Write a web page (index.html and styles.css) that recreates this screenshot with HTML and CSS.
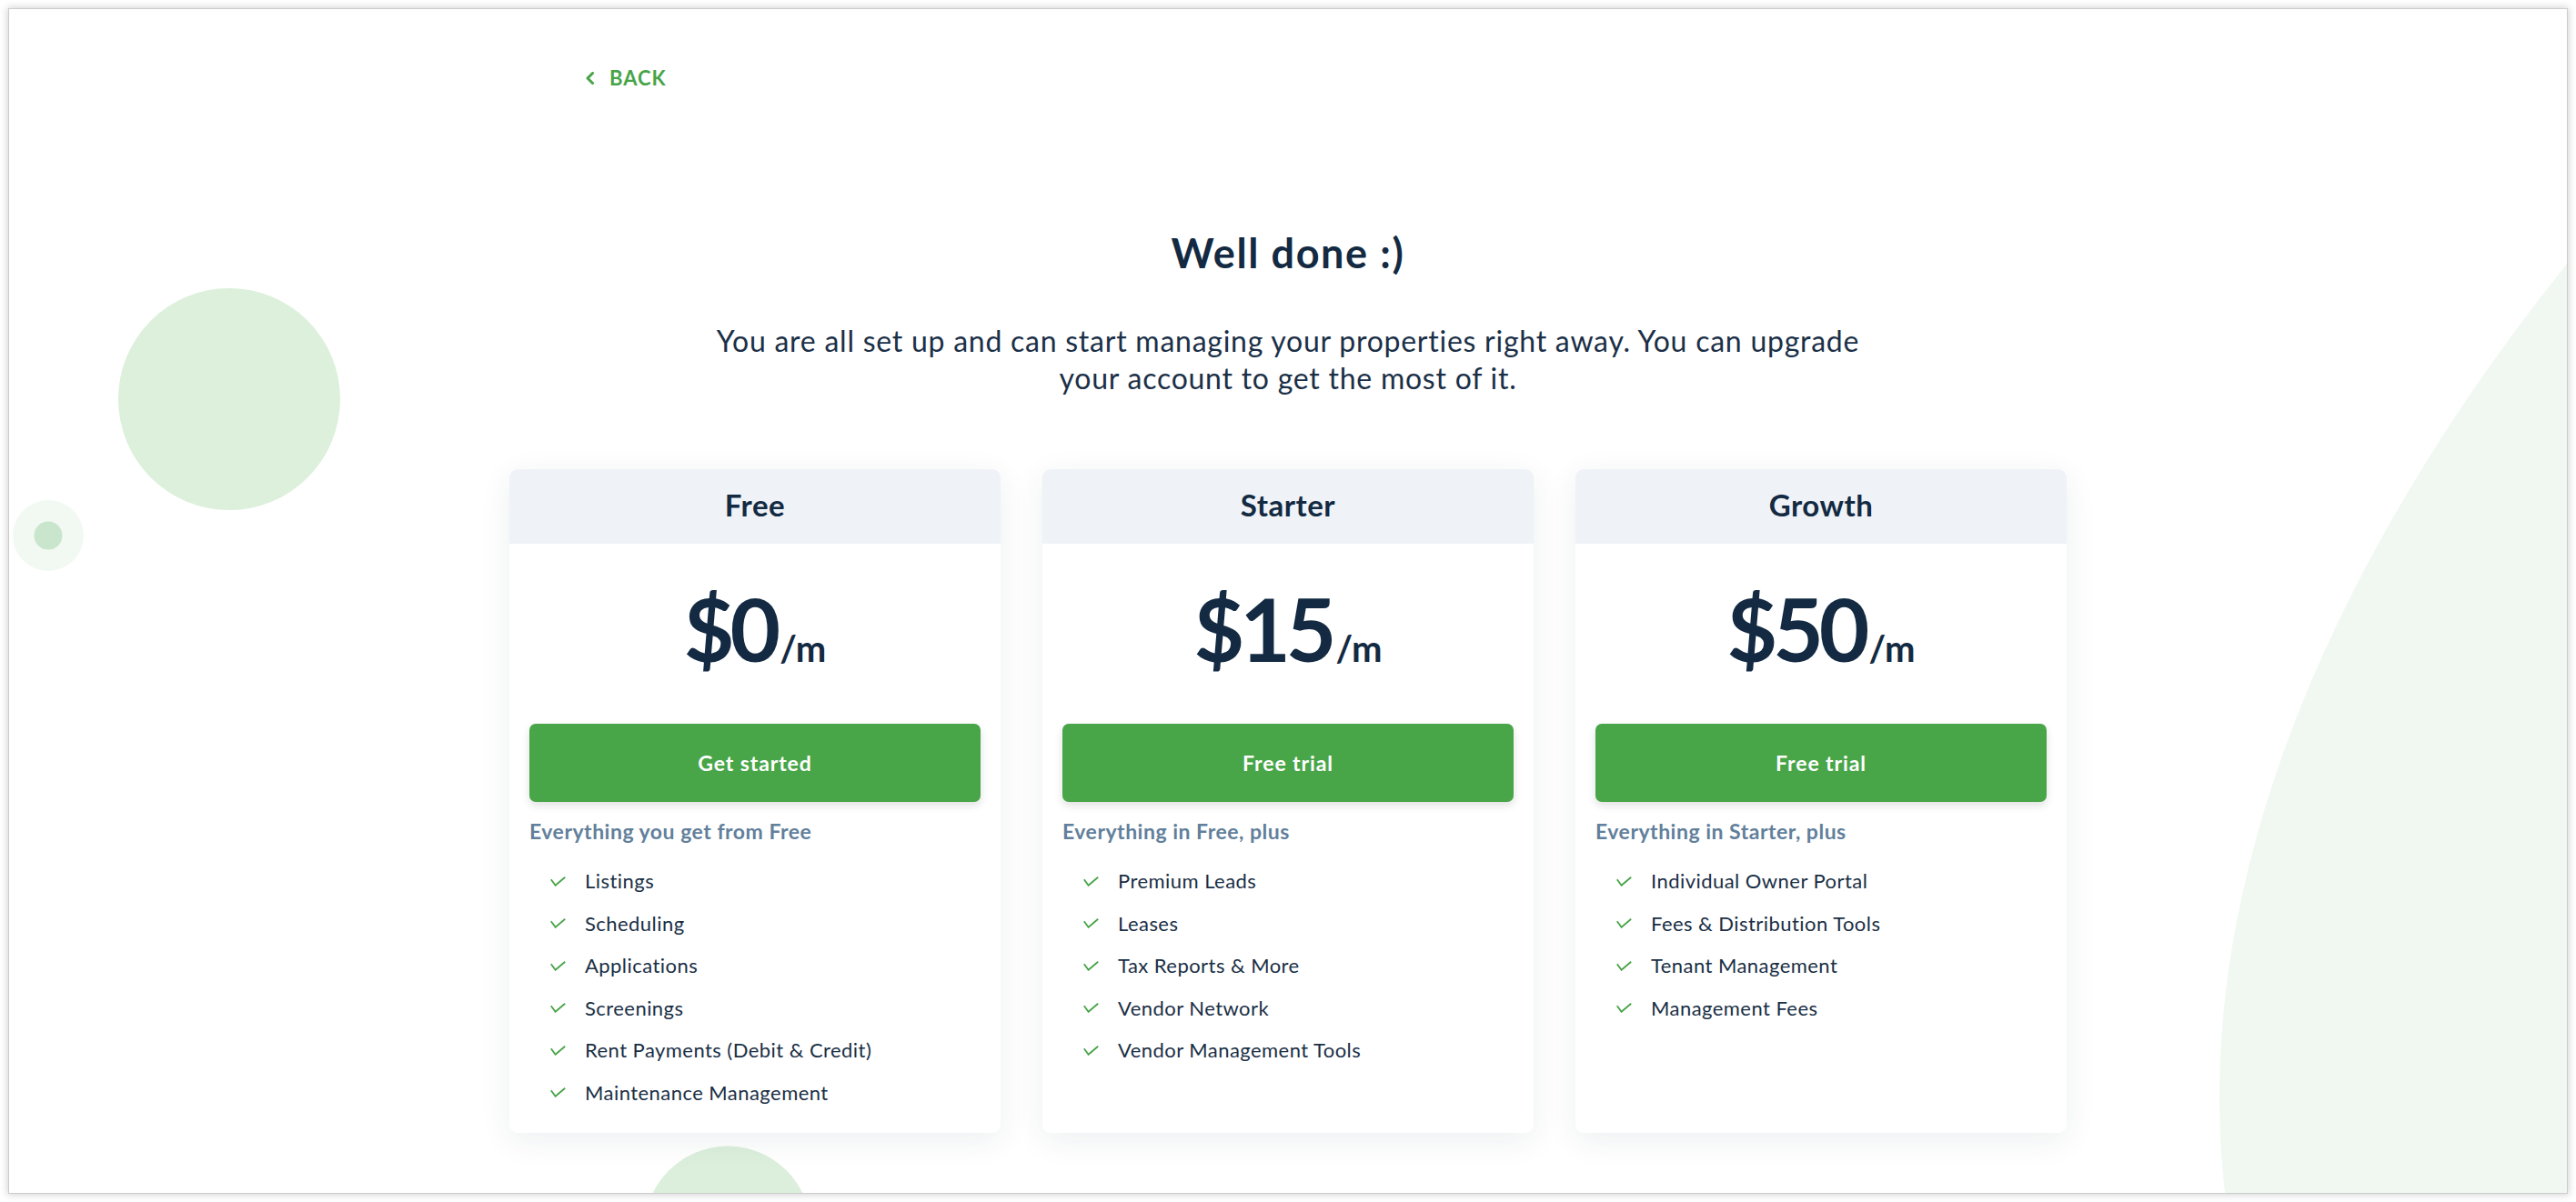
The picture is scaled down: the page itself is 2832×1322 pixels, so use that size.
FILE: index.html
```html
<!DOCTYPE html>
<html lang="en">
<head>
<meta charset="utf-8">
<title>Well done</title>
<link rel="stylesheet" href="styles.css">
</head>
<body>
<div class="window">
  <svg class="decor" viewBox="0 0 2812 1302" width="2812" height="1302" aria-hidden="true">
    <path d="M2812,280 C2620,520 2430,850 2430,1197 C2430,1240 2433,1275 2437,1310 L2812,1310 Z" fill="#f1f8f2"/>
    <circle cx="242" cy="429" r="122" fill="#dcf0dc"/>
    <circle cx="43" cy="579" r="39" fill="#f2f9f2"/>
    <circle cx="43" cy="579" r="15.5" fill="#c9e5cc"/>
    <circle cx="790" cy="1342" r="91.5" fill="#dcefdc"/>
  </svg>
  <main class="content">
    <a class="back" href="#">
      <svg class="back-icon" viewBox="0 0 10 14" width="10" height="14"><polyline points="8.5,1.5 3,7 8.5,12.5" fill="none" stroke="#47a447" stroke-width="3" stroke-linecap="round" stroke-linejoin="round"/></svg>
      <span>BACK</span>
    </a>
    <h1 class="title">Well done :)</h1>
    <p class="lead">You are all set up and can start managing your properties right away. You can upgrade your account to get the most of it.</p>
    <section class="plans">
      <article class="plan">
        <header class="plan-head">Free</header>
        <div class="plan-body">
          <div class="price"><span class="amount">$0</span><span class="per">/m</span></div>
          <a class="cta" href="#">Get started</a>
          <h3 class="includes">Everything you get from Free</h3>
          <ul class="features">
            <li><svg class="check" viewBox="0 0 17 11" width="17" height="11"><polyline points="0.8,3.2 5.6,9.8 16.2,0.8" fill="none" stroke="#47a447" stroke-width="1.8"/></svg>Listings</li>
            <li><svg class="check" viewBox="0 0 17 11" width="17" height="11"><polyline points="0.8,3.2 5.6,9.8 16.2,0.8" fill="none" stroke="#47a447" stroke-width="1.8"/></svg>Scheduling</li>
            <li><svg class="check" viewBox="0 0 17 11" width="17" height="11"><polyline points="0.8,3.2 5.6,9.8 16.2,0.8" fill="none" stroke="#47a447" stroke-width="1.8"/></svg>Applications</li>
            <li><svg class="check" viewBox="0 0 17 11" width="17" height="11"><polyline points="0.8,3.2 5.6,9.8 16.2,0.8" fill="none" stroke="#47a447" stroke-width="1.8"/></svg>Screenings</li>
            <li><svg class="check" viewBox="0 0 17 11" width="17" height="11"><polyline points="0.8,3.2 5.6,9.8 16.2,0.8" fill="none" stroke="#47a447" stroke-width="1.8"/></svg>Rent Payments (Debit &amp; Credit)</li>
            <li><svg class="check" viewBox="0 0 17 11" width="17" height="11"><polyline points="0.8,3.2 5.6,9.8 16.2,0.8" fill="none" stroke="#47a447" stroke-width="1.8"/></svg>Maintenance Management</li>
          </ul>
        </div>
      </article>
      <article class="plan">
        <header class="plan-head">Starter</header>
        <div class="plan-body">
          <div class="price"><span class="amount">$15</span><span class="per">/m</span></div>
          <a class="cta" href="#">Free trial</a>
          <h3 class="includes">Everything in Free, plus</h3>
          <ul class="features">
            <li><svg class="check" viewBox="0 0 17 11" width="17" height="11"><polyline points="0.8,3.2 5.6,9.8 16.2,0.8" fill="none" stroke="#47a447" stroke-width="1.8"/></svg>Premium Leads</li>
            <li><svg class="check" viewBox="0 0 17 11" width="17" height="11"><polyline points="0.8,3.2 5.6,9.8 16.2,0.8" fill="none" stroke="#47a447" stroke-width="1.8"/></svg>Leases</li>
            <li><svg class="check" viewBox="0 0 17 11" width="17" height="11"><polyline points="0.8,3.2 5.6,9.8 16.2,0.8" fill="none" stroke="#47a447" stroke-width="1.8"/></svg>Tax Reports &amp; More</li>
            <li><svg class="check" viewBox="0 0 17 11" width="17" height="11"><polyline points="0.8,3.2 5.6,9.8 16.2,0.8" fill="none" stroke="#47a447" stroke-width="1.8"/></svg>Vendor Network</li>
            <li><svg class="check" viewBox="0 0 17 11" width="17" height="11"><polyline points="0.8,3.2 5.6,9.8 16.2,0.8" fill="none" stroke="#47a447" stroke-width="1.8"/></svg>Vendor Management Tools</li>
          </ul>
        </div>
      </article>
      <article class="plan">
        <header class="plan-head">Growth</header>
        <div class="plan-body">
          <div class="price"><span class="amount">$50</span><span class="per">/m</span></div>
          <a class="cta" href="#">Free trial</a>
          <h3 class="includes">Everything in Starter, plus</h3>
          <ul class="features">
            <li><svg class="check" viewBox="0 0 17 11" width="17" height="11"><polyline points="0.8,3.2 5.6,9.8 16.2,0.8" fill="none" stroke="#47a447" stroke-width="1.8"/></svg>Individual Owner Portal</li>
            <li><svg class="check" viewBox="0 0 17 11" width="17" height="11"><polyline points="0.8,3.2 5.6,9.8 16.2,0.8" fill="none" stroke="#47a447" stroke-width="1.8"/></svg>Fees &amp; Distribution Tools</li>
            <li><svg class="check" viewBox="0 0 17 11" width="17" height="11"><polyline points="0.8,3.2 5.6,9.8 16.2,0.8" fill="none" stroke="#47a447" stroke-width="1.8"/></svg>Tenant Management</li>
            <li><svg class="check" viewBox="0 0 17 11" width="17" height="11"><polyline points="0.8,3.2 5.6,9.8 16.2,0.8" fill="none" stroke="#47a447" stroke-width="1.8"/></svg>Management Fees</li>
          </ul>
        </div>
      </article>
    </section>
  </main>
</div>
</body>
</html>
```

FILE: styles.css
```css
* { box-sizing: border-box; }

html, body {
  margin: 0;
  padding: 0;
  background: #ffffff;
}

body {
  font-family: Lato, "Noto Sans", sans-serif;
  color: #132a42;
}

.window {
  position: relative;
  margin: 10px;
  height: 1302px;
  background: #ffffff;
  overflow: hidden;
  box-shadow: 0 0 0 1px #cccccc, 0 0 8px 2px rgba(0, 0, 0, 0.18);
}

.decor {
  position: absolute;
  top: 0;
  left: 0;
  display: block;
}

.content {
  position: relative;
  width: 1712px;
  margin: 0 auto;
  padding-top: 64px;
  display: flex;
  flex-direction: column;
}

.back {
  align-self: flex-start;
  margin-left: 83px;
  display: flex;
  align-items: center;
  gap: 17px;
  height: 24px;
  color: #47a447;
  text-decoration: none;
  font-weight: 700;
  font-size: 22px;
  line-height: 24px;
  letter-spacing: 1px;
}

.back-icon { display: block; }

.title {
  margin: 154px 0 0;
  text-align: center;
  font-size: 45px;
  line-height: 52px;
  font-weight: 700;
  letter-spacing: 1.6px;
  color: #132a42;
}

.lead {
  margin: 50px auto 0;
  max-width: 1290px;
  text-align: center;
  font-size: 32px;
  line-height: 41px;
  font-weight: 400;
  letter-spacing: 0.75px;
  color: #1b3047;
}

.plans {
  margin-top: 80px;
  display: grid;
  grid-template-columns: repeat(3, 540px);
  column-gap: 46px;
  align-items: stretch;
}

.plan {
  background: #ffffff;
  border-radius: 9px;
  overflow: hidden;
  box-shadow: 0 8px 34px rgba(30, 45, 60, 0.08);
}

.plan-head {
  height: 82px;
  padding-bottom: 4px;
  display: flex;
  align-items: center;
  justify-content: center;
  background: #eff3f8;
  font-size: 33px;
  font-weight: 700;
  letter-spacing: 0.5px;
  color: #132a42;
}

.plan-body {
  padding: 45px 22px 21px;
}

.price {
  display: flex;
  justify-content: center;
  align-items: baseline;
  height: 96px;
  line-height: 96px;
  color: #132a42;
}

.amount {
  font-size: 96px;
  font-weight: 700;
  letter-spacing: -5px;
}

.per {
  font-size: 40px;
  font-weight: 700;
  margin-left: 4px;
}

.cta {
  display: flex;
  align-items: center;
  justify-content: center;
  margin-top: 57px;
  height: 86px;
  border-radius: 7px;
  background: #48a548;
  color: #ffffff;
  text-decoration: none;
  font-size: 23px;
  font-weight: 700;
  letter-spacing: 0.9px;
  box-shadow: 0 4px 10px rgba(0, 0, 0, 0.12);
}

.includes {
  margin: 18px 0 0;
  font-size: 23px;
  line-height: 28px;
  font-weight: 700;
  letter-spacing: 0.5px;
  color: #627f9b;
}

.features {
  list-style: none;
  margin: 18px 0 0;
  padding: 0 0 0 23px;
}

.features li {
  display: flex;
  align-items: center;
  gap: 21px;
  height: 46.5px;
  font-size: 22px;
  line-height: 46px;
  letter-spacing: 0.45px;
  color: #1a2f45;
}

.check {
  display: block;
  flex: none;
}
```
